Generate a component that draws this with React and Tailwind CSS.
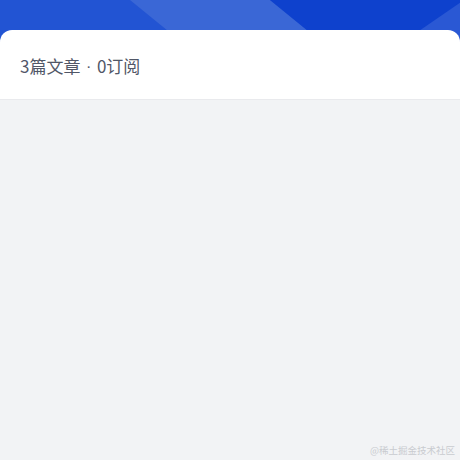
import React from 'react';

const App = () => {
    return (
        <div className="relative w-[460px] h-[460px] overflow-hidden bg-[#f2f3f5] flex flex-col" style={{ fontFamily: '"Noto Sans CJK SC", Roboto, sans-serif' }}>

            {/* Header banner */}
            <div className="relative h-[44px] shrink-0 bg-[#2254d3]">
                <svg className="absolute inset-0 w-full h-full" viewBox="0 0 460 44" preserveAspectRatio="none">
                    <polygon points="130,0 270,0 324,44 184,44" fill="#3a67d6" />
                    <polygon points="270,0 460,0 460,44 324,44" fill="#0e41cd" />
                    <polygon points="470,-4 400,44 460,44" fill="#2a58d4" />
                </svg>
            </div>

            {/* Info card */}
            <div className="relative -mt-[14px] h-[70px] shrink-0 bg-white rounded-t-[12px] border-b border-[#e9eaed] flex items-center px-5 pt-[5px]">
                <span className="text-[17px] text-[#515767]">
                    3篇文章<span className="px-[6px]" style={{ fontFamily: 'Roboto, sans-serif' }}>·</span>0订阅
                </span>
            </div>

            <div className="flex-1" />

            {/* Watermark */}
            <span className="absolute right-[5px] bottom-[3px] text-[9.5px] text-[#c9cbd0]">@稀土掘金技术社区</span>
        </div>
    );
};

export default App;
